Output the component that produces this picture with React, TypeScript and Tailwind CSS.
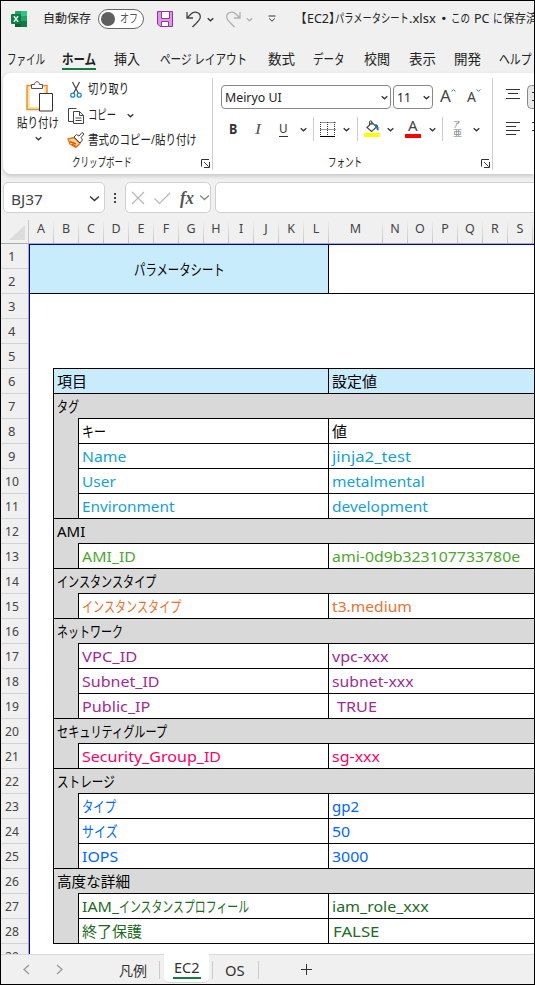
import React, { useLayoutEffect, useRef, useState } from "react";

const UI = "font-['Noto_Sans','Noto_Sans_CJK_JP',sans-serif]";

/** Text condensed or widened horizontally to occupy exactly `w` pixels. */
function Fit({ w, text, className = "" }: { w: number; text: string; className?: string }) {
  const ref = useRef<HTMLSpanElement>(null);
  const [scale, setScale] = useState(1);
  useLayoutEffect(() => {
    if (ref.current) setScale(w / ref.current.offsetWidth);
  }, [w, text]);
  return (
    <span className={"inline-block shrink-0 whitespace-pre " + className} style={{ width: w }}>
      <span ref={ref} className="inline-block origin-left" style={{ transform: `scaleX(${scale})` }}>
        {text}
      </span>
    </span>
  );
}

function Chevron({ className = "", size = 7, color = "#333" }: { className?: string; size?: number; color?: string }) {
  return (
    <svg className={"shrink-0 " + className} width={size} height={size} viewBox="0 0 7 7" fill="none" stroke={color} strokeWidth={size > 8 ? 0.9 : 1.3}>
      <path d="M0.7 2.2 L3.5 4.8 L6.3 2.2" />
    </svg>
  );
}

function Launcher({ className = "" }: { className?: string }) {
  return (
    <svg className={"shrink-0 " + className} width="9" height="9" viewBox="0 0 9 9" fill="none" stroke="#333">
      <path d="M0.5 7.5V0.5H8M3 3L7.5 7.5M8.5 3V8.5H3" />
    </svg>
  );
}

function TitleBar() {
  return (
    <div className="flex h-[36px] shrink-0 items-center pl-[10px] text-[12.5px] text-[#222]">
      <svg width="16" height="16" viewBox="0 0 16 16" className="shrink-0">
        <rect x="4" y="0" width="12" height="16" rx="1" fill="#21a366" />
        <rect x="10" y="0" width="6" height="5" fill="#33c481" />
        <rect x="4" y="5" width="6" height="6" fill="#107c41" />
        <rect x="4" y="11" width="12" height="5" fill="#185c37" />
        <rect x="10" y="10" width="6" height="6" fill="#107c41" />
        <rect x="0" y="3" width="10" height="10" rx="1" fill="#107c41" />
        <path d="M2.9 5.2L7.1 10.8M7.1 5.2L2.9 10.8" stroke="#fff" strokeWidth="1.4" />
      </svg>
      <Fit w={48} text="自動保存" className="ml-[16px]" />
      <div className="ml-[7px] flex h-[20px] w-[46px] shrink-0 items-center rounded-full border border-[#666] bg-white pl-[2px]">
        <span className="h-[14px] w-[14px] rounded-full bg-[#5f5f5f]" />
        <Fit w={18} text="オフ" className="ml-[5px] text-[12.5px] text-[#555]" />
      </div>
      <svg width="16" height="16" viewBox="0 0 16 16" className="ml-[13px] shrink-0" fill="#d79be0" stroke="#9a2fa8">
        <path d="M.5 .5H15.5V15.5H3L.5 13Z" />
        <path d="M4.5 .5H12.5V7.5H4.5Z" fill="#fff" />
        <path d="M4.5 15.5V10.5H11.5V15.5Z" fill="#fff" />
      </svg>
      <svg width="16" height="17" viewBox="0 0 16 17" className="ml-[13px] shrink-0" fill="none" stroke="#444" strokeWidth="1.3">
        <path d="M1 1V7H7M1.3 6.7L5 3C8-.1 14.300 1 14.300 6C14.300 9 12 10.500 6.500 16" />
      </svg>
      <Chevron className="ml-[5px]" />
      <svg width="16" height="17" viewBox="0 0 16 17" className="ml-[11px] shrink-0" fill="none" stroke="#b0b0b0" strokeWidth="1.3">
        <path d="M15 1V7H9M14.700 6.700L11 3C8-.1 1.700 1 1.700 6C1.700 9 4 10.500 9.500 16" />
      </svg>
      <Chevron className="ml-[5px]" color="#b0b0b0" />
      <svg width="8" height="8" viewBox="0 0 8 8" className="ml-[15px] shrink-0" fill="none" stroke="#333">
        <path d="M.5 1H7.500M1.200 3.500L4 6.200L6.800 3.500" />
      </svg>
      <div className="ml-[19px] flex shrink-0 pt-px">
        <Fit w={12} text="【" />
        <Fit w={22} text="EC2" />
        <Fit w={12} text="】" />
        <Fit w={74} text="パラメータシート" className="-ml-[6px]" />
        <Fit w={27} text=".xlsx" />
        <Fit w={6} text="•" className="ml-[5px]" />
        <Fit w={19} text="この" className="ml-[4px]" />
        <Fit w={15} text="PC" className="ml-[4px]" />
        <Fit w={10} text="に" className="ml-[4px]" />
        <Fit w={35} text="保存済" />
      </div>
    </div>
  );
}

const MENUS: [string, number, string][] = [
  ["ファイル", 38, "ml-[6px]"],
  ["ホーム", 34, "ml-[17px]"],
  ["挿入", 26, "ml-[18px]"],
  ["ページ レイアウト", 87, "ml-[20px]"],
  ["数式", 27, "ml-[21px]"],
  ["データ", 32, "ml-[18px]"],
  ["校閲", 26, "ml-[19px]"],
  ["表示", 27, "ml-[19px]"],
  ["開発", 27, "ml-[18px]"],
  ["ヘルプ", 33, "ml-[18px]"],
];

function MenuTabs() {
  return (
    <div className="flex h-[36px] shrink-0 pt-[12px] text-[13.5px] leading-[20px] text-[#222]">
      {MENUS.map(([t, w, m], i) => (
        <div key={t} className={m + " h-[21px] shrink-0 " + (i === 1 ? "border-b-2 border-[#107c41] font-bold" : "")}>
          <Fit w={w} text={t} />
        </div>
      ))}
    </div>
  );
}

function ClipboardGroup() {
  return (
    <div className="flex w-[210px] shrink-0 flex-col border-r border-[#d0d0d0]">
      <div className="flex h-[78px]">
        <div className="ml-[14px] flex w-[42px] flex-col items-center">
          <svg width="28" height="31" viewBox="0 0 28 31" className="mt-[3px] ml-[4px] shrink-0" fill="none">
            <path d="M1 4.500H21V28.500H1Z" fill="#fbe3b0" stroke="#e8912d" strokeWidth="1.500" />
            <path d="M4 6.500H18V26H4Z" fill="#fff" />
            <path d="M5.500 7.500V3.500H8.500C8.500-.3 13.500-.3 13.500 3.500H16.500V7.500Z" fill="#fff" stroke="#555" />
            <path d="M13.500 12.500H26.500V30H13.500Z" fill="#fff" stroke="#333" />
          </svg>
          <Fit w={42} text="貼り付け" className="mt-px leading-[18px]" />
          <Chevron className="mt-[4px]" />
        </div>
        <div className="ml-[8px] flex flex-col">
          <div className="flex h-[23px] items-center">
            <svg width="18" height="18" viewBox="0 0 18 18" fill="none" className="mt-px shrink-0">
              <path d="M5.500 1L11.500 12.500M12.500 1L6.500 12.500" stroke="#444" strokeWidth="1.200" />
              <circle cx="5.700" cy="14.200" r="2" stroke="#1e88d2" strokeWidth="1.300" />
              <circle cx="12.200" cy="14.200" r="2" stroke="#1e88d2" strokeWidth="1.300" />
            </svg>
            <Fit w={41} text="切り取り" className="mb-[3px] ml-[3px]" />
          </div>
          <div className="mt-[3px] flex h-[23px] items-center">
            <svg width="18" height="18" viewBox="0 0 18 18" fill="none" stroke="#444" className="shrink-0">
              <path d="M6 14.500H1.500V1.500H9.500" />
              <path d="M6.500 4.500H12.500L16.500 8.500V16.500H6.500ZM12.500 4.500V8.500H16.500M8.500 11H14.500M8.500 13.500H14.500" />
            </svg>
            <Fit w={28} text="コピー" className="mb-[3px] ml-[3px]" />
            <Chevron className="ml-[11px]" />
          </div>
          <div className="mt-[3px] flex h-[23px] items-center">
            <svg width="18" height="18" viewBox="0 0 18 18" fill="none" className="mb-[3px] shrink-0">
              <path d="M1 8L7 6.500L13 12.500L9 16.500L3 13Z" fill="#fbd3a0" stroke="#e8740c" strokeWidth="1.300" />
              <path d="M3 10.500L9 13M5 13L9 15.500" stroke="#d85f00" strokeWidth="1.400" />
              <path d="M7 6L9.500 3.500L12 5L15 1.500L17 3L14 6.500L15.500 9L13 12Z" fill="#fff" stroke="#444" />
            </svg>
            <Fit w={109} text="書式のコピー/貼り付け" className="mb-[5px] ml-[3px]" />
          </div>
        </div>
      </div>
      <div className="flex h-[14px] items-center">
        <Fit w={60} text="クリップボード" className="ml-[69px] text-[12.5px]" />
        <Launcher className="ml-[69px]" />
      </div>
    </div>
  );
}

function FontGroup() {
  return (
    <div className="flex w-[280px] shrink-0 flex-col border-r border-[#d0d0d0]">
      <div className="mt-[7px] flex h-[24px] items-center">
        <div className="ml-[8px] flex h-[24px] w-[170px] shrink-0 items-center rounded-[4px] border border-[#888] pl-[3px]">
          <Fit w={57} text="Meiryo UI" className="text-[13px]" />
          <Chevron className="ml-[99px]" />
        </div>
        <div className="ml-[2px] flex h-[24px] w-[40px] shrink-0 items-center rounded-[4px] border border-[#888] pl-[3px]">
          <Fit w={14} text="11" className="text-[13px]" />
          <Chevron className="ml-[12px]" />
        </div>
        <div className="ml-[7px] flex shrink-0 items-start text-[#444]">
          <Fit w={11} text="A" className="text-[17px] leading-[22px]" />
          <Chevron size={5} color="#1e78c8" className="mt-[3px] -scale-y-100" />
          <Fit w={9} text="A" className="ml-[11px] text-[14px] leading-[24px]" />
          <Chevron size={5} color="#1e78c8" className="mt-[3px]" />
        </div>
      </div>
      <div className="mt-[8px] flex h-[24px] items-center">
        <Fit w={8} text="B" className="ml-[16px] text-[14px] font-bold text-[#333]" />
        <Fit w={6} text="I" className="ml-[18px] font-['Liberation_Serif'] text-[15px] text-[#555] italic" />
        <Fit w={9} text="U" className="ml-[18px] h-[15px] border-b border-[#333] text-[13px] leading-[13px] text-[#333]" />
        <Chevron className="ml-[12px]" />
        <span className="ml-[6px] h-[24px] w-px shrink-0 bg-[#ccc]" />
        <svg width="16" height="17" viewBox="0 0 16 17" className="ml-[6px] shrink-0" fill="none" stroke="#333">
          <path d="M.5 1.500H15.500M.5 8.500H15.500M.5 1V14M7.500 1V14M14.500 1V14" strokeDasharray="1 1" />
          <path d="M0 15.500H15" stroke="#000" />
        </svg>
        <Chevron className="ml-[7px]" />
        <span className="ml-[7px] h-[24px] w-px shrink-0 bg-[#ccc]" />
        <svg width="17" height="18" viewBox="0 0 17 18" className="ml-[6px] shrink-0" fill="none">
          <path d="M3 7.500L8 2.500L12.500 7L7.500 11.500Z" stroke="#444" strokeWidth="1.100" />
          <path d="M5.500 5V1.500Q7.500-.5 8 2V5" stroke="#444" />
          <path d="M11 4Q15 3.500 14.500 10.500Q12 10.500 12.500 7Z" fill="#1769b0" />
          <path d="M0 13H16V17H0Z" fill="#ff0" />
        </svg>
        <Chevron className="ml-[6px]" />
        <div className="ml-[11px] flex h-[18px] w-[16px] shrink-0 flex-col items-center border-b-[4px] border-[#f00]">
          <Fit w={10} text="A" className="text-[15px] leading-[11px] text-[#444]" />
        </div>
        <Chevron className="ml-[8px]" />
        <span className="ml-[6px] h-[24px] w-px shrink-0 bg-[#ccc]" />
        <div className="ml-[10px] flex w-[9px] shrink-0 flex-col text-[8px] leading-[8px] text-[#777]">
          <Fit w={7} text="ア" className="h-[9px]" />
          <Fit w={9} text="亜" className="h-[9px]" />
        </div>
        <Chevron className="ml-[11px]" />
      </div>
      <div className="mt-[15px] flex h-[14px] items-center">
        <Fit w={34} text="フォント" className="ml-[115px] text-[12.5px]" />
        <Launcher className="ml-[119px]" />
      </div>
    </div>
  );
}

function Ribbon() {
  return (
    <div className="ml-[2px] flex h-[101px] shrink-0 rounded-l-[8px] bg-white text-[13px] leading-[16px] text-[#222] shadow-[0_2px_4px_rgba(0,0,0,0.18)]">
      <div className="mt-[5px] flex h-[92px]">
        <ClipboardGroup />
        <FontGroup />
        <svg width="42" height="64" viewBox="0 0 42 64" className="shrink-0" fill="none" stroke="#333">
          <path d="M13 11.500H27M15 15.500H25M13 20.500H27M13 44.500H27M13 48.500H23M13 52.500H27M13 56.500H23" />
          <rect x="34.500" y="7.500" width="30" height="23" rx="4" fill="#e8e8e8" stroke="#888" />
          <path d="M39 14.500H42M39 22.500H42M39 44.500H42M39 52.500H42" />
        </svg>
      </div>
    </div>
  );
}

function FormulaBar() {
  return (
    <div className="mt-[8px] flex h-[31px] shrink-0 items-center pl-[2px]">
      <div className="flex h-[31px] w-[102px] shrink-0 items-center rounded-[5px] border border-[#d0d0d0] bg-white pt-[3px] pl-[7px] text-[#444]">
        <Fit w={32} text="BJ37" className="text-[14px]" />
        <Chevron className="mb-[2px] ml-[46px]" size={11} />
      </div>
      <svg width="4" height="12" viewBox="0 0 4 12" className="ml-[8px] shrink-0" fill="#444">
        <path d="M1 1h2v2H1zM1 5h2v2H1zM1 9h2v2H1z" />
      </svg>
      <div className="ml-[8px] flex h-[31px] w-[86px] shrink-0 items-center rounded-[5px] border border-[#d0d0d0] bg-white pl-[5px]">
        <svg width="40" height="14" viewBox="0 0 40 14" className="shrink-0" fill="none" stroke="#b5b5b5" strokeWidth="1.100">
          <path d="M1 1L13 13M13 1L1 13M23.500 7.500L28.500 12.500L39 2" />
        </svg>
        <Fit w={14} text="fx" className="ml-[9px] font-['Liberation_Serif'] text-[18px] leading-[24px] font-bold text-[#555] italic" />
        <Chevron className="ml-[5px]" size={11} color="#888" />
      </div>
      <div className="ml-[4px] h-[31px] w-[330px] shrink-0 rounded-l-[5px] border border-[#d0d0d0] bg-white" />
    </div>
  );
}

const LETTERS = "ABCDEFGHIJKLMNOPQRS".split("");

function ColumnHeader() {
  return (
    <div className="flex h-[31px] shrink-0 border-b border-[#ababab] pt-[7px] text-[12.5px] leading-[17px] text-[#444]">
      <div className="flex h-[23px] w-[28px] shrink-0 justify-end border-r border-[#c8c8c8] pt-[5px] pr-[3px]">
        <svg width="16" height="15" viewBox="0 0 16 15">
          <path d="M16 0V15H0Z" fill="#dcdcdc" />
        </svg>
      </div>
      {LETTERS.map((l) => (
        <div key={l} className={"flex h-[23px] shrink-0 " + (l === "M" ? "w-[54px]" : "w-[25px]")}>
          <span className="flex-1 text-center">{l}</span>
          <span className="h-full w-px bg-gradient-to-b from-[#f0f0f0] to-[#c4c4c4]" />
        </div>
      ))}
    </div>
  );
}

type Seg = [string, number];
type Row = { head?: Seg; key?: Seg[]; val?: Seg; color?: string; title?: boolean; last?: boolean; pad?: boolean };

const ROWS: Row[] = [
  { title: true, key: [["項目", 30]], val: ["設定値", 45] },
  { head: ["タグ", 22] },
  { key: [["キー", 24]], val: ["値", 15], color: "text-black" },
  { key: [["Name", 44]], val: ["jinja2_test", 79], color: "text-[#159fd8]" },
  { key: [["User", 34]], val: ["metalmental", 93], color: "text-[#159fd8]" },
  { key: [["Environment", 93]], val: ["development", 96], color: "text-[#159fd8]", last: true },
  { head: ["AMI", 28] },
  { key: [["AMI_ID", 54]], val: ["ami-0d9b323107733780e", 188], color: "text-[#4ea72e]", last: true },
  { head: ["インスタンスタイプ", 99] },
  { key: [["インスタンスタイプ", 99]], val: ["t3.medium", 80], color: "text-[#e97132]", last: true },
  { head: ["ネットワーク", 66] },
  { key: [["VPC_ID", 55]], val: ["vpc-xxx", 57], color: "text-[#a02b93]" },
  { key: [["Subnet_ID", 78]], val: ["subnet-xxx", 81], color: "text-[#a02b93]" },
  { key: [["Public_IP", 68]], val: ["TRUE", 40], color: "text-[#a02b93]", last: true, pad: true },
  { head: ["セキュリティグループ", 110] },
  { key: [["Security_Group_ID", 139]], val: ["sg-xxx", 48], color: "text-[#ff0066]", last: true },
  { head: ["ストレージ", 58] },
  { key: [["タイプ", 34]], val: ["gp2", 27], color: "text-[#0066ff]" },
  { key: [["サイズ", 36]], val: ["50", 18], color: "text-[#0066ff]" },
  { key: [["IOPS", 36]], val: ["3000", 36], color: "text-[#0066ff]", last: true },
  { head: ["高度な詳細", 73] },
  { key: [["IAM_", 37], ["インスタンスプロフィール", 130]], val: ["iam_role_xxx", 97], color: "text-[#1b6b22]" },
  { key: [["終了保護", 60]], val: ["FALSE", 47], color: "text-[#1b6b22]", last: true, pad: true },
];

function SheetRow({ row }: { row: Row }) {
  if (row.title) {
    return (
      <div className="flex h-[25px] border-b border-black bg-[#c9ecfc]">
        <div className="w-[275px] shrink-0 border-r border-black pl-[3px]">
          <Fit w={row.key![0][1]} text={row.key![0][0]} />
        </div>
        <div className="pl-[3px]">
          <Fit w={row.val![1]} text={row.val![0]} />
        </div>
      </div>
    );
  }
  if (row.head) {
    return (
      <div className="flex h-[25px] bg-[#d9d9d9]">
        <div className="w-[24px] shrink-0 pl-[3px]">
          <Fit w={row.head[1]} text={row.head[0]} />
        </div>
        <div className="flex-1 border-b border-black" />
      </div>
    );
  }
  return (
    <div className={"flex h-[25px] " + row.color}>
      <div className={"w-[24px] shrink-0 bg-[#d9d9d9] " + (row.last ? "border-b border-black" : "")} />
      <div className="flex w-[251px] shrink-0 border-x border-b border-black pl-[3px]">
        {row.key!.map(([t, w]) => (
          <Fit key={t} w={w} text={t} />
        ))}
      </div>
      <div className={"flex-1 border-b border-black " + (row.pad ? (row.val![0] === "TRUE" ? "pl-[8px]" : "pl-[4px]") : "pl-[3px]")}>
        <Fit w={row.val![1]} text={row.val![0]} />
      </div>
    </div>
  );
}

function Sheet() {
  return (
    <div className="flex h-[710px] shrink-0 overflow-hidden">
      <div className="flex w-[28px] shrink-0 flex-col border-r border-[#ababab] text-[13px] text-[#444]">
        {Array.from({ length: 29 }, (_, i) => (
          <div key={i} className="flex h-[25px] shrink-0 items-center border-b border-[#d2d2d2] pt-px">
            <Fit w={i < 9 ? 7 : 14} text={String(i + 1)} className={i < 9 ? "ml-[7px]" : "ml-[4px]"} />
          </div>
        ))}
      </div>
      <div className="flex flex-1 flex-col overflow-hidden border-t border-l border-[#0000a8] bg-white text-[15px] leading-[25px] text-black">
        <div className="flex h-[49px] shrink-0 border-b border-black">
          <div className="flex w-[299px] shrink-0 items-center justify-center border-r border-black bg-[#c9ecfc]">
            <Fit w={91} text="パラメータシート" />
          </div>
        </div>
        <div className="h-[74px] shrink-0" />
        <div className="ml-[23px] shrink-0 border-t border-l border-black">
          {ROWS.map((r, i) => (
            <SheetRow key={i} row={r} />
          ))}
        </div>
      </div>
    </div>
  );
}

function SheetTabs() {
  return (
    <div className="flex h-[30px] shrink-0 border-t border-[#d8d8d8] text-[14px] leading-[17px] text-[#333]">
      <svg width="62" height="29" viewBox="0 0 62 29" className="shrink-0" fill="none" stroke="#999" strokeWidth="1.300">
        <path d="M28 10L23 14.500L28 19M56 10L61 14.500L56 19" />
      </svg>
      <Fit w={28} text="凡例" className="mt-[7px] ml-[56px]" />
      <span className="mt-[6px] ml-[12px] h-[18px] w-px shrink-0 bg-[#ccc]" />
      <div className="-mt-px ml-[4px] flex h-[29px] w-[45px] shrink-0 flex-col items-center rounded-b-[5px] border-b border-[#d8d8d8] bg-white pt-[3px]">
        <div className="flex h-[22px] w-[28px] justify-center border-b-2 border-[#107c41] pt-[2px]">
          <Fit w={26} text="EC2" />
        </div>
      </div>
      <span className="mt-[6px] ml-[3px] h-[18px] w-px shrink-0 bg-[#ccc]" />
      <Fit w={20} text="OS" className="mt-[7px] ml-[12px]" />
      <span className="mt-[6px] ml-[13px] h-[18px] w-px shrink-0 bg-[#ccc]" />
      <svg width="12" height="12" viewBox="0 0 12 12" className="mt-[9px] ml-[42px] shrink-0" stroke="#333">
        <path d="M0 5.500H11M5.500 0V11" />
      </svg>
    </div>
  );
}

export default function App() {
  return (
    <div className={"flex h-[985px] w-[535px] flex-col overflow-hidden border border-black bg-[#f0f0f0] " + UI}>
      <TitleBar />
      <MenuTabs />
      <Ribbon />
      <FormulaBar />
      <ColumnHeader />
      <Sheet />
      <SheetTabs />
    </div>
  );
}
